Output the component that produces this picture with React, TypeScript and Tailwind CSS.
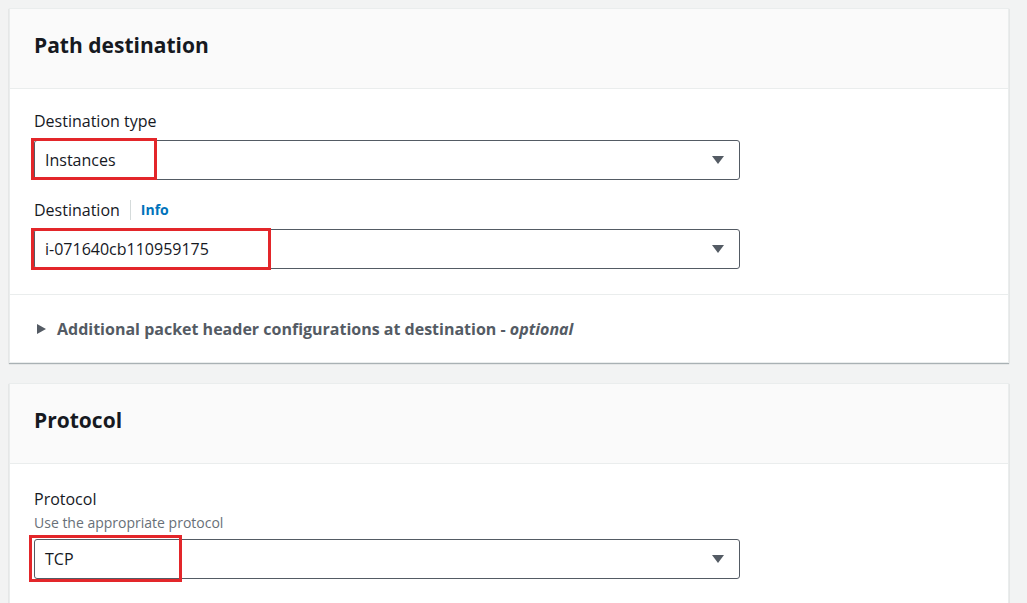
const font = { fontFamily: '"Open Sans", "Noto Sans", sans-serif' }

function Caret() {
  return (
    <svg width="14" height="10" viewBox="0 0 14 10" className="shrink-0">
      <path d="M1 1h12L7 9z" fill="#545b64" />
    </svg>
  )
}

function Select({ value, boxW, boxClass }: { value: string; boxW: string; boxClass: string }) {
  return (
    <div className="relative w-[706px]">
      <div className="flex h-[40px] items-center justify-between rounded-[3px] border border-[#545b64] bg-white pl-[10px] pr-[14px] text-[16px] text-[#16191f]">
        <span>{value}</span>
        <Caret />
      </div>
      <div className={`pointer-events-none absolute border-[3px] border-[#e3262a] ${boxW} ${boxClass}`} />
    </div>
  )
}

function Header({ title }: { title: string }) {
  return (
    <div className="flex h-[80px] items-center border-b border-[#eaeded] bg-[#fafafa] px-[24px] pb-[6px]">
      <h2 className="text-[21px] font-bold text-[#16191f]">{title}</h2>
    </div>
  )
}

export default function App() {
  return (
    <div className="h-[603px] w-[1027px] overflow-hidden bg-[#f2f3f3] pl-[9px] pr-[18px] pt-[8px]" style={font}>
      <div className="border border-[#eaeded] bg-white shadow-[0_1px_1px_rgba(0,28,36,0.3)]">
        <Header title="Path destination" />
        <div className="px-[24px] pt-[21px] pb-[25px]">
          <div className="mb-[8px] text-[16px] leading-[22px] text-[#16191f]">Destination type</div>
          <Select value="Instances" boxW="w-[126px]" boxClass="-left-[3px] -top-[2px] h-[42px]" />
          <div className="mt-[19px] mb-[8px] flex items-center text-[16px] leading-[22px] text-[#16191f]">
            <span>Destination</span>
            <span className="mx-[10px] h-[20px] w-px bg-[#d5dbdb]" />
            <span className="text-[14px] font-bold text-[#0073bb]">Info</span>
          </div>
          <Select value="i-071640cb110959175" boxW="w-[240px]" boxClass="-left-[3px] -top-[1px] h-[42px]" />
        </div>
        <div className="flex h-[68px] items-center gap-[10px] border-t border-[#eaeded] px-[25px] text-[16px] font-bold text-[#545b64]">
          <svg width="12" height="12" viewBox="0 0 12 12"><path d="M2 1l9 5-9 5z" fill="#545b64" /></svg>
          <span>
            Additional packet header configurations at destination - <i>optional</i>
          </span>
        </div>
      </div>
      <div className="mt-[20px] border border-[#eaeded] bg-white shadow-[0_1px_1px_rgba(0,28,36,0.3)]">
        <Header title="Protocol" />
        <div className="px-[24px] pt-[24px] pb-[25px]">
          <div className="text-[16px] leading-[22px] text-[#16191f]">Protocol</div>
          <div className="mt-[3px] mb-[6px] text-[14px] leading-[20px] text-[#687078]">Use the appropriate protocol</div>
          <Select value="TCP" boxW="w-[153px]" boxClass="-left-[5px] -top-[4px] h-[47px]" />
        </div>
      </div>
    </div>
  )
}
